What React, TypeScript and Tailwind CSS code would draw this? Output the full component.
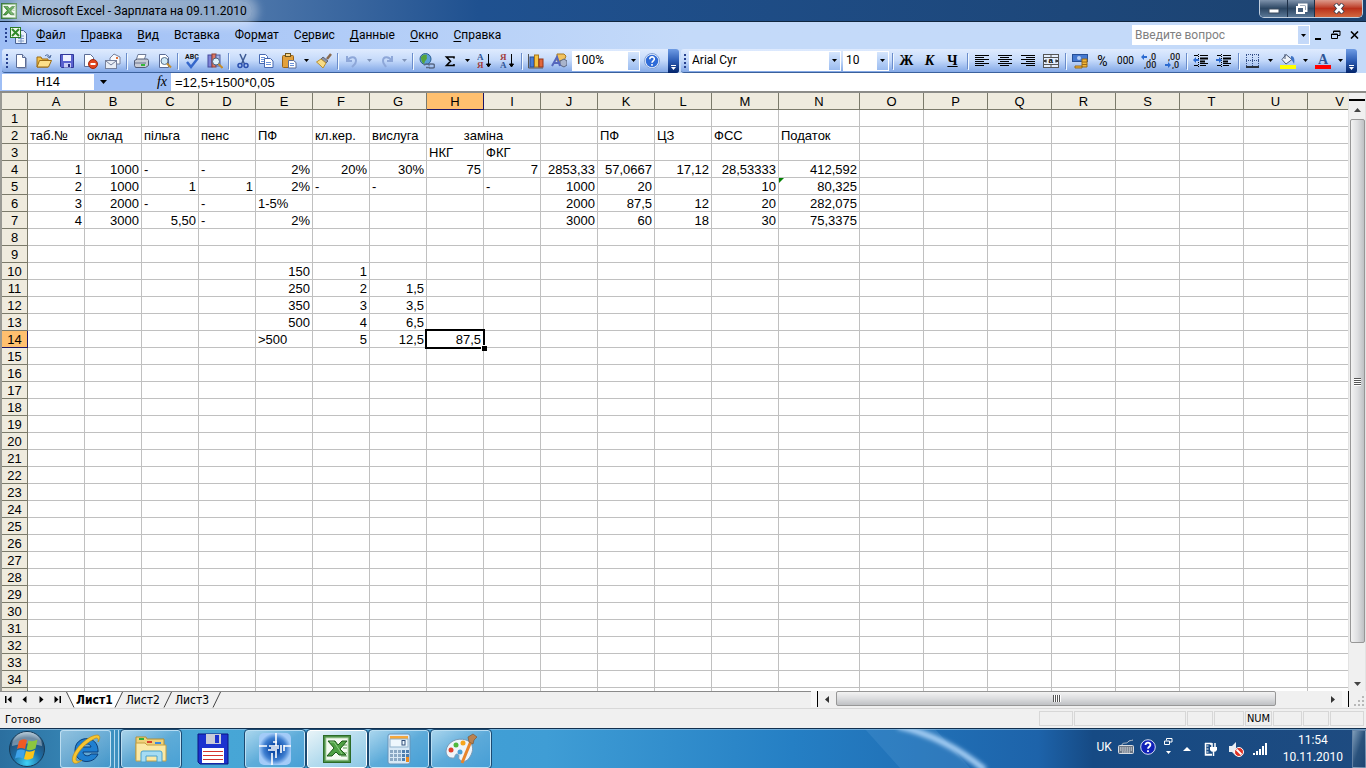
import { clsx } from 'clsx'
import type { ReactNode } from 'react'

const columns = [
  { name: 'A', w: 57 }, { name: 'B', w: 57 }, { name: 'C', w: 57 }, { name: 'D', w: 57 },
  { name: 'E', w: 57 }, { name: 'F', w: 57 }, { name: 'G', w: 57 }, { name: 'H', w: 57 },
  { name: 'I', w: 57 }, { name: 'J', w: 57 }, { name: 'K', w: 57 }, { name: 'L', w: 57 },
  { name: 'M', w: 67 }, { name: 'N', w: 81 }, { name: 'O', w: 64 }, { name: 'P', w: 64 },
  { name: 'Q', w: 64 }, { name: 'R', w: 64 }, { name: 'S', w: 64 }, { name: 'T', w: 64 },
  { name: 'U', w: 64 }, { name: 'V', w: 64 },
]

const rows = Array.from({ length: 34 }, (_, i) => i + 1)

const cells: Record<string, string> = {
  A2: 'таб.№', B2: 'оклад', C2: 'пільга', D2: 'пенс', E2: 'ПФ', F2: 'кл.кер.', G2: 'вислуга', H2: 'заміна',
  K2: 'ПФ', L2: 'ЦЗ', M2: 'ФСС', N2: 'Податок',
  H3: 'НКГ', I3: 'ФКГ',
  A4: '1', B4: '1000', C4: '-', D4: '-', E4: '2%', F4: '20%', G4: '30%', H4: '75', I4: '7',
  J4: '2853,33', K4: '57,0667', L4: '17,12', M4: '28,53333', N4: '412,592',
  A5: '2', B5: '1000', C5: '1', D5: '1', E5: '2%', F5: '-', G5: '-', I5: '-', J5: '1000', K5: '20', M5: '10', N5: '80,325',
  A6: '3', B6: '2000', C6: '-', D6: '-', E6: '1-5%', J6: '2000', K6: '87,5', L6: '12', M6: '20', N6: '282,075',
  A7: '4', B7: '3000', C7: '5,50', D7: '-', E7: '2%', J7: '3000', K7: '60', L7: '18', M7: '30', N7: '75,3375',
  E10: '150', F10: '1',
  E11: '250', F11: '2', G11: '1,5',
  E12: '350', F12: '3', G12: '3,5',
  E13: '500', F13: '4', G13: '6,5',
  E14: '>500', F14: '5', G14: '12,5', H14: '87,5',
}

const isNumber = (v: string) => /^[\d,]+%?$/.test(v)

const menus = [
  ['', 'Ф', 'айл'], ['', 'П', 'равка'], ['', 'В', 'ид'], ['Вст', 'а', 'вка'], ['Фор', 'м', 'ат'],
  ['С', 'е', 'рвис'], ['', 'Д', 'анные'], ['', 'О', 'кно'], ['', 'С', 'правка'],
]

function Svg({ children, size = 16, box = '0 0 16 16' }: { children: ReactNode; size?: number; box?: string }) {
  return <svg width={size} height={size} viewBox={box} className="block shrink-0" aria-hidden="true">{children}</svg>
}

function ExcelMark({ size = 16 }: { size?: number }) {
  return (
    <Svg size={size} box="0 0 28 28">
      <rect x="0.5" y="0.5" width="27" height="27" fill="#4d9147" stroke="#2c6a27" />
      <rect x="3" y="3" width="22" height="22" fill="#f4faf1" stroke="#b7d8b2" />
      <path d="M18 18h6M18 21h6M20 10h4M20 13h4" stroke="#8cbf86" strokeWidth="1.5" />
      <path d="M5 6h7l3 4 4-4h5l-7 8 6 6h-7l-3-3-4 4H4l7-8z" fill="#4ea043" stroke="#1c5a19" />
      <path d="M7 7h4l8 12" fill="none" stroke="#8fce86" />
    </Svg>
  )
}

function Grip() {
  return (
    <svg width="3" height="16" className="shrink-0" aria-hidden="true">
      {[1, 5, 9, 13].map(y => <rect key={y} x="0" y={y} width="2" height="2" fill="#27418f" />)}
    </svg>
  )
}

function Caret({ color = '#000' }: { color?: string }) {
  return <svg width="5" height="3" className="block shrink-0" aria-hidden="true"><path d="M0 0h5L2.500 3z" fill={color} /></svg>
}

function Tool({ label, children }: { label: string; children: ReactNode }) {
  return <button aria-label={label} className="flex h-[22px] w-[23px] shrink-0 items-center justify-center">{children}</button>
}

function Drop({ label, color }: { label: string; color?: string }) {
  return <button aria-label={label} className="flex h-[22px] w-3 shrink-0 items-center justify-center"><Caret color={color} /></button>
}

function Sep({ wide }: { wide?: boolean }) {
  return (
    <span className={clsx('flex shrink-0 justify-center', wide ? 'w-[6px]' : 'w-[5px]')}>
      <span className="h-4 w-px bg-[#6a8ccb] shadow-[1px_1px_0_#f1f9ff]" />
    </span>
  )
}

function Combo({ label, value, className }: { label: string; value: string; className?: string }) {
  return (
    <span className={clsx('relative block h-[20px] shrink-0 border border-white bg-white', className)}>
      <select aria-label={label} className="block h-full w-full appearance-none bg-white pl-[2px] pb-[1px] text-[12px] leading-4 text-black outline-none">
        <option>{value}</option>
      </select>
      <span className="pointer-events-none absolute inset-y-0 right-0 flex w-[11px] items-center justify-center bg-linear-to-b from-[#d6e6fd] to-[#9bbcf0]"><Caret /></span>
    </span>
  )
}

function BarEnd() {
  return (
    <button aria-label="Параметры панелей" className="flex h-6 w-[11px] shrink-0 flex-col items-center justify-end gap-px rounded-r-[3px] bg-linear-to-b from-[#6f9ce4] via-[#2c5cb4] to-[#04246b] pb-[3px]">
      <span className="h-px w-[5px] bg-white" />
      <Caret color="#fff" />
    </button>
  )
}

const page = <path d="M3.500 1.500h6l3 3v10h-9z" fill="#fff" stroke="#5b6c96" />

function Align({ mode }: { mode: 'left' | 'center' | 'right' }) {
  return (
    <Svg>
      {[2, 4, 6, 8, 10, 12].map((y, i) => {
        const w = i % 2 ? 9 : 14
        const x = mode === 'left' ? 1 : mode === 'right' ? 15 - w : Math.floor(8 - w / 2)
        return <rect key={y} x={x} y={y} width={w} height="1" fill="#000" />
      })}
    </Svg>
  )
}

function Sort({ top, bottom, topColor, bottomColor }: { top: string; bottom: string; topColor: string; bottomColor: string }) {
  return (
    <Svg>
      <text x="0" y="7" fontSize="9" fontWeight="700" fontFamily="Liberation Serif" fill={topColor}>{top}</text>
      <text x="0" y="15" fontSize="9" fontWeight="700" fontFamily="Liberation Serif" fill={bottomColor}>{bottom}</text>
      <path d="M11.500 1v12M9.500 11l2 3 2-3z" stroke="#000" fill="#000" />
    </Svg>
  )
}

function Decimal({ grow }: { grow?: boolean }) {
  return (
    <Svg>
      <text x={grow ? 8 : 4} y="7" fontSize="9" fontWeight="500" fontFamily="Roboto" fill="#222">{grow ? ',0' : ',00'}</text>
      <text x={grow ? 3 : 8} y="15" fontSize="9" fontWeight="500" fontFamily="Roboto" fill="#222">{grow ? ',00' : ',0'}</text>
      {grow
        ? <path d="M0 4l3-3v2h3v2H3v2z" fill="#2c6bd0" />
        : <path d="M7 12l-3-3v2H1v2h3v2z" fill="#2c6bd0" />}
    </Svg>
  )
}

function Indent({ out }: { out?: boolean }) {
  return (
    <Svg>
      <path d="M1 2.500h4M7 2.500h8M1 12.500h4M7 12.500h6" stroke="#000" />
      <path d="M7 5.500h8M7 8.500h5" stroke="#000" strokeWidth="2" />
      <path d="M7 10.500h8" stroke="#000" />
      <path d="M5.500 1v14" stroke="#000" strokeDasharray="1 1" />
      <path d={out ? 'M0 7l3-3v2h3v2H3v2z' : 'M6 7L3 4v2H0v2h3v2z'} fill="#2c6bd0" />
    </Svg>
  )
}

function StandardBar() {
  return (
    <div className="flex h-6 w-[677px] shrink-0 items-center rounded-[3px] border-b border-[#3b619c] bg-linear-to-b from-[#dfebfe] via-[#c4d9fa] to-[#83a8e6] pl-1">
      <Grip />
      <Tool label="Создать"><Svg>{page}<path d="M9.500 1.500v3h3" fill="#cfd9ee" stroke="#5b6c96" /><path d="M13.500 5v10.500H5" stroke="#8fa0c4" fill="none" /></Svg></Tool>
      <Tool label="Открыть"><Svg><path d="M1 4h4l1 2h6v8H1z" fill="#f3c24b" stroke="#9c6a12" /><path d="M3.500 7.500h12l-3 6.500H1z" fill="#fde08a" stroke="#9c6a12" /><path d="M9 3c2-2 4-1 4.500 1M15 2l-1.200 3-2.400-1.500" stroke="#3d5c92" fill="none" /></Svg></Tool>
      <Tool label="Сохранить"><Svg><path d="M1.500 1.500h13v13h-12l-1-1z" fill="#5a62cf" stroke="#30389a" /><rect x="4" y="2" width="8" height="6" fill="#eef1ff" /><rect x="5" y="10" width="7" height="4.500" fill="#c9cdf4" /><rect x="9" y="11" width="2" height="3" fill="#262e84" /></Svg></Tool>
      <Tool label="Разрешение"><Svg><path d="M2.500 1.500h6l3 3v9h-9z" fill="#fff" stroke="#5b6c96" /><circle cx="11" cy="11" r="4.500" fill="#e1451f" stroke="#9e2a10" /><path d="M8.500 11h5" stroke="#fff" strokeWidth="2" /></Svg></Tool>
      <Tool label="Сообщение"><Svg><path d="M5 5l4-4 6 3v7H5z" fill="#f6f8fd" stroke="#76809b" /><rect x="0.500" y="7.500" width="11" height="8" fill="#e9edf5" stroke="#76809b" /><path d="M1 8l5 4 5-4" fill="none" stroke="#76809b" /><rect x="11" y="4" width="2" height="2" fill="#e37236" /></Svg></Tool>
      <Sep />
      <Tool label="Печать"><Svg><path d="M5 1.500h8l-2 6H3z" fill="#fff" stroke="#6f7c98" /><path d="M1.500 7.500l3-1.500h10l1 1.500v5l-3 2h-10l-1-2z" fill="#c8ccd6" stroke="#515c76" /><path d="M2 10h11" stroke="#6a758e" /><rect x="8" y="11" width="4" height="2" fill="#33b93a" /></Svg></Tool>
      <Tool label="Просмотр"><Svg>{page}<circle cx="8.500" cy="8" r="3.500" fill="#cfe9f7" stroke="#5a708b" /><path d="M11 10.500l4 4" stroke="#c58c28" strokeWidth="2" /></Svg></Tool>
      <Sep />
      <Tool label="Орфография"><Svg><text x="1" y="6" fontSize="7" fontWeight="700" fontFamily="Roboto" fill="#111">ABC</text><path d="M3 9l4 5 7-9" stroke="#3567cb" strokeWidth="2.500" fill="none" /></Svg></Tool>
      <Tool label="Справочные материалы"><Svg><rect x="1" y="2" width="4" height="12" fill="#7e83d8" stroke="#454a9c" /><rect x="5" y="1" width="4" height="13" fill="#db7867" stroke="#96402f" /><rect x="9" y="2" width="4" height="11" fill="#a5b3e5" stroke="#4c5ca0" /><circle cx="9" cy="8.500" r="3.500" fill="#dff2fb" stroke="#49617f" /><path d="M11.500 11l4 4" stroke="#c58c28" strokeWidth="2" /></Svg></Tool>
      <Sep />
      <Tool label="Вырезать"><Svg><path d="M5 1l4.500 10M11 1L6.500 11" stroke="#3d5a94" strokeWidth="1.500" /><circle cx="5" cy="12.500" r="2" fill="none" stroke="#2b4fae" strokeWidth="1.500" /><circle cx="11" cy="12.500" r="2" fill="none" stroke="#2b4fae" strokeWidth="1.500" /></Svg></Tool>
      <Tool label="Копировать"><Svg><path d="M1.500 1.500h6l2 2v7h-8z" fill="#fff" stroke="#4668b0" /><path d="M3 4.500h4M3 6.500h5M3 8.500h4" stroke="#6c93d8" /><path d="M6.500 5.500h6l2.500 2.500v6.500H6.500z" fill="#fff" stroke="#4668b0" /><path d="M8 9.500h5M8 11.500h5" stroke="#6c93d8" /></Svg></Tool>
      <Tool label="Вставить"><Svg><rect x="1.500" y="2.500" width="11" height="12" rx="1" fill="#e3a13c" stroke="#9a6317" /><rect x="4.500" y="0.500" width="5" height="3" fill="#f8d68b" stroke="#6b541f" /><path d="M7.500 7.500h5l2.500 2v5.500H7.500z" fill="#fff" stroke="#5b6c96" /><path d="M9 10.500h4M9 12.500h4" stroke="#6c93d8" /></Svg></Tool>
      <Drop label="Варианты вставки" />
      <Tool label="Формат по образцу"><Svg><path d="M15 1l-4 5" stroke="#8a6a4c" strokeWidth="2.500" /><path d="M7 4l5 4-2 2-5-4z" fill="#8c93a5" stroke="#5f667a" /><path d="M5 6l5 4-3 5C5 13 3 11 0.500 9z" fill="#f7dc86" stroke="#b88f2f" /></Svg></Tool>
      <Sep />
      <Tool label="Отменить"><Svg><path d="M3 3v5h5M3.500 7.500C6 3 12 3 12 8c0 3-2 4-4 6" fill="none" stroke="#8ea7d8" strokeWidth="2" /></Svg></Tool>
      <Drop label="Список отмены" color="#7f93b8" />
      <Tool label="Вернуть"><Svg><path d="M13 3v5H8M12.500 7.500C10 3 4 3 4 8c0 3 2 4 3 6" fill="none" stroke="#8ea7d8" strokeWidth="2" /></Svg></Tool>
      <Drop label="Список возврата" color="#7f93b8" />
      <Sep />
      <Tool label="Гиперссылка"><Svg><circle cx="6.500" cy="6" r="5.500" fill="#5aa1d8" stroke="#2d5f93" /><path d="M2 4c2-3 5-3 6-2-1 2 1 3-1 5s-1 3-2 4c-2-1-3-4-3-7z" fill="#55a43b" /><path d="M5.500 12.500c0-2 4-2 5 0M7 14.500h4M10 11h3.500a2 2 0 010 4H10" fill="none" stroke="#596a86" strokeWidth="1.500" /></Svg></Tool>
      <Tool label="Автосумма"><Svg><path d="M12 5.500V4H4.500l4 4.200-4 4.300H12V11" fill="none" stroke="#000" strokeWidth="1.600" /></Svg></Tool>
      <Drop label="Функции суммы" />
      <Tool label="По возрастанию"><Sort top="А" bottom="Я" topColor="#2e5596" bottomColor="#a33d3d" /></Tool>
      <Tool label="По убыванию"><Sort top="Я" bottom="А" topColor="#a33d3d" bottomColor="#2e5596" /></Tool>
      <Sep />
      <Tool label="Мастер диаграмм"><Svg><path d="M0.500 1v14H15" stroke="#555" fill="none" /><rect x="2" y="4" width="4" height="10" fill="#4b7fd6" stroke="#274c94" /><rect x="6.500" y="2" width="4" height="12" fill="#f6c544" stroke="#a9761b" /><rect x="11" y="6" width="4" height="8" fill="#e2673a" stroke="#96361a" /></Svg></Tool>
      <Tool label="Рисование"><Svg><path d="M6 1h7l2 2-2 5H6z" fill="#f1c25e" stroke="#a97a22" /><path d="M9 8l4-2 3 2v4l-3 2-4-2z" fill="#a9b4cb" stroke="#5a6680" /><path d="M1 13L6 4l3 9M3 10h5" fill="none" stroke="#5567bd" strokeWidth="2" /></Svg></Tool>
      <span className="w-[2px] shrink-0" />
      <Combo label="Масштаб" value="100%" className="w-[68px]" />
      <Tool label="Справка"><Svg><circle cx="8" cy="8" r="7" fill="#2f6bd8" stroke="#e8f1ff" strokeWidth="1.500" /><circle cx="8" cy="8" r="7.500" fill="none" stroke="#5c83c4" strokeWidth="0.700" /><path d="M5.800 6.200C5.800 3 10.500 3.300 10.300 6.200 10.200 7.800 8 7.800 8 9.800M8 11v1.800" fill="none" stroke="#fff" strokeWidth="1.600" /></Svg></Tool>
      <span className="flex-1" />
      <BarEnd />
    </div>
  )
}

function FormatBar() {
  return (
    <div className="flex h-6 w-[676px] shrink-0 items-center rounded-[3px] border-b border-[#3b619c] bg-linear-to-b from-[#dfebfe] via-[#c4d9fa] to-[#83a8e6] pl-[3px]">
      <Grip />
      <span className="w-[2px] shrink-0" />
      <Combo label="Шрифт" value="Arial Cyr" className="w-[152px]" />
      <span className="w-[2px] shrink-0" />
      <Combo label="Размер" value="10" className="w-[46px]" />
      <Sep wide />
      <Tool label="Полужирный"><b className="font-['Liberation_Serif',serif] text-[14px] leading-4">Ж</b></Tool>
      <Tool label="Курсив"><i className="font-['Liberation_Serif',serif] text-[14px] leading-4 font-bold">К</i></Tool>
      <Tool label="Подчеркнутый"><u className="font-['Liberation_Serif',serif] text-[14px] leading-4 font-bold">Ч</u></Tool>
      <Sep wide />
      <Tool label="По левому краю"><Align mode="left" /></Tool>
      <Tool label="По центру"><Align mode="center" /></Tool>
      <Tool label="По правому краю"><Align mode="right" /></Tool>
      <Tool label="Объединить"><Svg><rect x="0.500" y="1.500" width="15" height="13" fill="#e5effd" stroke="#555" /><path d="M0 4.500h16M0 11.500h16M8 1v3M8 12v3" stroke="#555" /><text x="5.500" y="10" fontSize="8" fontWeight="700" fontFamily="Liberation Sans" fill="#000">a</text><path d="M1 8h3M12 8h3M3 6.500L1.500 8 3 9.500M13 6.500L14.500 8 13 9.500" stroke="#000" fill="none" /></Svg></Tool>
      <Sep wide />
      <Tool label="Денежный формат"><Svg><rect x="0.500" y="1.500" width="15" height="7" fill="#4478cf" stroke="#264f96" /><circle cx="7" cy="5" r="2" fill="#b7d0f5" /><path d="M3 13h7v2H3zM10 6h5v8h-5z" fill="#f3b637" stroke="#9b6a17" /><path d="M10 9h5M10 11.500h5" stroke="#9b6a17" /></Svg></Tool>
      <Tool label="Процентный формат"><span className="text-[14px] leading-4">%</span></Tool>
      <Tool label="Формат с разделителями"><span className="text-[10px] leading-4">000</span></Tool>
      <Tool label="Увеличить разрядность"><Decimal grow /></Tool>
      <Tool label="Уменьшить разрядность"><Decimal /></Tool>
      <Sep wide />
      <Tool label="Уменьшить отступ"><Indent out /></Tool>
      <Tool label="Увеличить отступ"><Indent /></Tool>
      <Sep wide />
      <Tool label="Границы"><Svg><path d="M1.500 2v11M7.500 2v11M13.500 2v11M1 1.500h13M1 7.500h13" stroke="#35508a" strokeDasharray="1 1" fill="none" /><path d="M1 14h13" stroke="#000" strokeWidth="1.500" /></Svg></Tool>
      <Drop label="Виды границ" />
      <Tool label="Цвет заливки"><Svg><path d="M6 1.500l6 5-6 4.500-4-4.500z" fill="#eef2f8" stroke="#4b5a78" /><path d="M5 1v5" stroke="#4b5a78" /><path d="M11 3c3 0 4 3 3 8-1-2-2-4-3-5z" fill="#3f73c5" /><rect x="0" y="12" width="16" height="4" fill="#ff0" /></Svg></Tool>
      <Drop label="Палитра заливки" />
      <Tool label="Цвет шрифта"><Svg><text x="3" y="11" fontSize="14" fontWeight="700" fontFamily="Liberation Serif" fill="#2e5596" className="leading-3">A</text><rect x="0" y="12" width="16" height="4" fill="#f00" /></Svg></Tool>
      <Drop label="Палитра шрифта" />
      <span className="flex-1" />
      <BarEnd />
    </div>
  )
}

function TitleBar() {
  return (
    <header className="flex h-[22px] shrink-0 items-center border-b border-[#10263f] bg-linear-to-r from-[#7d9fc6] via-[#1f5190] via-35% to-[#1c426f] pl-[1px]">
      <ExcelMark />
      <h1 className="rounded-full bg-white/35 px-[5px] text-[12px] leading-5 text-black shadow-[0_0_8px_6px_rgba(255,255,255,0.35)]">Microsoft Excel - Зарплата на 09.11.2010</h1>
      <div className="mr-[3px] ml-auto flex h-[18px] self-start overflow-hidden rounded-b-[5px] border border-t-0 border-[#c0cede]">
        <button aria-label="Свернуть" className="flex w-7 items-center justify-center border-r border-[#1c2f47] bg-linear-to-b from-[#7f93ac] via-[#2c4663] to-[#5a7897]">
          <svg width="12" height="12"><rect x="1" y="6" width="10" height="4" fill="#fff" stroke="#3c4c60" /></svg>
        </button>
        <button aria-label="Восстановить" className="flex w-[27px] items-center justify-center border-r border-[#1c2f47] bg-linear-to-b from-[#7f93ac] via-[#2c4663] to-[#5a7897]">
          <svg width="13" height="12"><path d="M4 3V1.500h7.500v6.500H10" fill="none" stroke="#fff" strokeWidth="2" /><rect x="2" y="4" width="7" height="6" fill="#48607c" stroke="#fff" strokeWidth="2" /></svg>
        </button>
        <button aria-label="Закрыть" className="flex w-[47px] items-center justify-center bg-linear-to-b from-[#dc9a8c] via-[#b9301a] to-[#d3673f]">
          <svg width="12" height="11"><path d="M2 1l8 9M10 1L2 10" stroke="#3b3b4b" strokeWidth="4.500" /><path d="M2.500 1.500l7 8M9.500 1.500l-7 8" stroke="#fff" strokeWidth="2.800" /></svg>
        </button>
      </div>
    </header>
  )
}

function MenuBar() {
  return (
    <nav className="flex h-[26px] shrink-0 items-center pl-[5px]">
      <Grip />
      <span className="mr-[9px] ml-[2px]">
        <Svg size={17} box="0 0 17 17"><path d="M5.500 3.500h8l3 3v10h-11z" fill="#e9f0fb" stroke="#4a6293" /><path d="M8 9h6M8 11.500h6M8 14h6M11 7v9" stroke="#7d98c8" /><rect x="0.500" y="0.500" width="10" height="10" fill="#eef8ec" stroke="#2b7a26" /><path d="M2 2l7 7M9 2L2 9" stroke="#2f8a29" strokeWidth="2" /></Svg>
      </span>
      {menus.map(([pre, key, post]) => (
        <button key={pre + key + post} className="mr-[15px] text-[12px] leading-4 whitespace-nowrap text-black">{pre}<u className="underline-offset-2">{key}</u>{post}</button>
      ))}
      <span className="relative ml-auto block h-[20px] w-[178px] border border-white bg-white">
        <input aria-label="Введите вопрос" placeholder="Введите вопрос" className="block h-full w-full bg-white px-[2px] text-[12px] leading-4 outline-none placeholder:text-[#808080]" />
        <button aria-label="Список вопросов" className="absolute inset-y-0 right-0 flex w-[11px] items-center justify-center bg-[#c4d9f9]"><Caret /></button>
      </span>
      <button aria-label="Свернуть книгу" className="ml-1 flex h-4 w-[17px] items-center"><svg width="7" height="12"><rect x="1" y="9" width="6" height="2" /></svg></button>
      <button aria-label="Восстановить книгу" className="flex h-4 w-[19px] items-center"><svg width="10" height="10"><path d="M2.500 3V1h6.500v4.500H7M2 1.500h7" fill="none" stroke="#000" /><path d="M0.500 4h6v4.500h-6zM0 4.500h7" fill="none" stroke="#000" /></svg></button>
      <button aria-label="Закрыть книгу" className="mr-[7px] flex h-4 w-[9px] items-center"><svg width="9" height="8"><path d="M1 0.500l7 7M8 0.500l-7 7" stroke="#000" strokeWidth="1.600" /></svg></button>
    </nav>
  )
}

function FormulaBar() {
  return (
    <div className="flex h-[18px] shrink-0 items-center bg-[#9ebef5] pl-[2px] font-['Liberation_Sans',Arial,sans-serif] text-[13px]">
      <input aria-label="Имя" defaultValue="H14" className="h-4 w-[92px] bg-white text-center leading-4 outline-none" />
      <button aria-label="Список имен" className="flex h-4 w-[18px] items-center justify-center"><svg width="7" height="4"><path d="M0 0h7L3.500 4z" /></svg></button>
      <button aria-label="Вставка функции" className="ml-auto w-3 font-['Liberation_Serif',serif] text-[14px] leading-4 italic">fx</button>
      <input aria-label="Строка формул" defaultValue="=12,5+1500*0,05" className="ml-[3px] h-[18px] w-[calc(100%-169px)] bg-white pl-1 leading-4 outline-none" />
    </div>
  )
}

function Sheet() {
  return (
    <div className="min-w-0 flex-1 overflow-hidden border-l-2 border-[#9a9a94] bg-white">
      <table className="w-max table-fixed border-separate border-spacing-0 font-['Liberation_Sans',Arial,sans-serif] text-[13px] leading-[14px] text-black">
        <colgroup>
          <col style={{ width: 26 }} />
          {columns.map(c => <col key={c.name} style={{ width: c.w }} />)}
        </colgroup>
        <thead>
          <tr>
            <td className="h-[17px] border-r border-b border-[#7b7a6a] bg-[#efebde] p-0" />
            {columns.map(c => (
              <th key={c.name} scope="col" className={clsx('h-[17px] border-r border-b px-0 pt-[2px] pb-0 text-center font-normal', c.name === 'H' ? 'border-[#1b1464] bg-[#ffc06f]' : 'border-[#7b7a6a] bg-[#efebde]')}>{c.name}</th>
            ))}
          </tr>
        </thead>
        <tbody>
          {rows.map(r => (
            <tr key={r}>
              <th scope="row" className={clsx('h-[17px] border-r border-b px-0 pt-[2px] pb-0 text-center font-normal', r === 14 ? 'border-[#1b1464] bg-[#ffc06f]' : 'border-[#7b7a6a] bg-[#efebde]')}>{r}</th>
              {columns.map(c => {
                const id = c.name + r
                const v = cells[id] ?? ''
                if (id === 'I2') return null
                return (
                  <td key={id} colSpan={id === 'H2' ? 2 : 1}
                    className={clsx('relative h-[17px] border-r border-b border-[#c0c0c0] px-[2px] pt-[2px] pb-0 whitespace-nowrap', id === 'H14' && 'z-10', id === 'H2' ? 'text-center' : isNumber(v) ? 'text-right' : 'text-left')}>
                    {v}
                    {id === 'N5' && <svg width="5" height="5" className="absolute top-0 left-0"><path d="M0 0h5L0 5z" fill="#008000" /></svg>}
                    {id === 'H14' && (
                      <span className="pointer-events-none absolute -top-[2px] -right-[2px] -bottom-[2px] -left-[2px] border-2 border-black">
                        <span className="absolute -right-[4px] -bottom-[4px] h-[6px] w-[6px] border-t border-l border-white bg-black" />
                      </span>
                    )}
                  </td>
                )
              })}
            </tr>
          ))}
          <tr aria-hidden="true">
            <td className="h-[17px] border-r border-[#7b7a6a] bg-[#efebde] p-0" />
            {columns.map(c => <td key={c.name} className="border-r border-[#c0c0c0] p-0" />)}
          </tr>
        </tbody>
      </table>
    </div>
  )
}

function VerticalScroll() {
  return (
    <div className="flex w-[18px] shrink-0 flex-col items-center border-x border-[#e3e3e3] bg-[#f0f0f0]">
      <span className="h-2 w-full border-b-2 border-black bg-[#f0f0f0]" />
      <button aria-label="Вверх" className="flex h-[18px] w-full shrink-0 items-center justify-center"><svg width="7" height="4"><path d="M0 4h7L3.500 0z" fill="#444" /></svg></button>
      <span className="flex w-[15px] flex-[522] flex-col items-center justify-center gap-px rounded-[2px] border border-[#979797] bg-linear-to-r from-[#f3f3f3] via-[#dedfe1] to-[#bfc1c4]">
        {[0, 1, 2, 3].map(i => <span key={i} className="h-px w-[7px] bg-[#555] shadow-[0_1px_0_#fff]" />)}
      </span>
      <span className="flex-[34]" />
      <button aria-label="Вниз" className="flex h-[14px] w-full shrink-0 items-center justify-center"><svg width="7" height="4"><path d="M0 0h7L3.500 4z" fill="#444" /></svg></button>
    </div>
  )
}

const Slash = () => <svg width="9" height="16" className="block shrink-0"><path d="M8.500 0L1 15.500" stroke="#444" fill="none" /></svg>

function SheetTabs() {
  return (
    <div className="flex h-[18px] shrink-0 border-b border-[#d8d8d8] bg-[#f0f0f0] font-['DejaVu_Sans_Condensed','Open_Sans',sans-serif]">
      <div className="flex h-4 w-[811px] shrink-0 items-center border-t border-[#8a8a8a]">
        <div className="flex w-[66px] shrink-0 items-center justify-around">
          <button aria-label="Первый лист"><svg width="7" height="7"><path d="M0 0h1.500v7H0zM6.500 0v7L2.500 3.500z" /></svg></button>
          <button aria-label="Предыдущий лист"><svg width="7" height="7"><path d="M5.500 0v7L1.500 3.500z" /></svg></button>
          <button aria-label="Следующий лист"><svg width="7" height="7"><path d="M1.500 0v7l4-3.500z" /></svg></button>
          <button aria-label="Последний лист"><svg width="7" height="7"><path d="M5.500 0H7v7H5.500zM0.500 0v7l4-3.500z" /></svg></button>
        </div>
        <div className="flex items-center text-[12px] leading-4">
          <svg width="9" height="16" className="block shrink-0"><path d="M0 0h9v15.500H7.500z" fill="#fff" /><path d="M0.500 0L8 15.500" stroke="#444" /></svg>
          <button className="flex h-[15px] items-center bg-white px-px font-bold">Лист1</button>
          <svg width="9" height="16" className="block shrink-0"><path d="M0 0h8.500L1 15.500H0z" fill="#fff" /><path d="M8.500 0L1 15.500" stroke="#444" /></svg>
          <button className="h-[15px] px-[3px]">Лист2</button>
          <Slash />
          <button className="h-[15px] px-[3px]">Лист3</button>
          <Slash />
        </div>
      </div>
      <span className="h-4 w-[7px] shrink-0 border-r border-black bg-[#f7f7f7]" />
      <button aria-label="Влево" className="flex h-4 w-[18px] shrink-0 items-center justify-center"><svg width="4" height="7"><path d="M4 0v7L0 3.500z" fill="#333" /></svg></button>
      <span className="flex h-[15px] flex-[440] items-center justify-center gap-px rounded-[2px] border border-[#979797] bg-linear-to-b from-[#f3f3f3] via-[#dcdddf] to-[#bfc1c4]">
        {[0, 1, 2, 3].map(i => <span key={i} className="h-[7px] w-px bg-[#555] shadow-[1px_0_0_#fff]" />)}
      </span>
      <span className="flex-[48]" />
      <button aria-label="Вправо" className="flex h-4 w-[18px] shrink-0 items-center justify-center"><svg width="4" height="7"><path d="M0 0v7l4-3.500z" fill="#333" /></svg></button>
      <span className="h-4 w-[7px] shrink-0 border-r border-black bg-[#f7f7f7]" />
      <svg width="17" height="16" className="shrink-0"><path d="M13 5h2v2h-2zM9 9h2v2H9zM13 9h2v2h-2zM5 13h2v2H5zM9 13h2v2H9zM13 13h2v2h-2z" fill="#b8b8b8" /></svg>
    </div>
  )
}

function StatusBar() {
  return (
    <footer className="flex h-[19px] shrink-0 items-center gap-px bg-[#f0f0f0] pr-[2px] pl-[5px] font-['DejaVu_Sans_Condensed','Open_Sans',sans-serif] text-[11px] leading-3 text-black">
      <span className="mr-auto pt-[2px]">Готово</span>
      <span className="h-[15px] w-[34px] border border-[#d7d7d7]" />
      <span className="h-[15px] w-[112px] border border-[#d7d7d7]" />
      <span className="h-[15px] w-[26px] border border-[#d7d7d7]" />
      <span className="h-[15px] w-[30px] border border-[#d7d7d7]" />
      <span className="flex h-[15px] w-[27px] items-center justify-center border border-[#d7d7d7]">NUM</span>
      <span className="h-[15px] w-[29px] border border-[#d7d7d7]" />
      <span className="h-[15px] w-[26px] border border-[#d7d7d7]" />
      <span className="h-[15px] w-[34px] border border-[#d7d7d7]" />
    </footer>
  )
}

function TaskButton({ label, state = 'open', children }: { label: string; state?: 'open' | 'active' | 'pinned'; children: ReactNode }) {
  return (
    <button aria-label={label}
      className={clsx('flex h-[38px] w-[60px] shrink-0 items-center justify-center rounded-[3px]',
        state === 'open' && 'border border-[#d3ecfa]/80 bg-linear-to-br from-[#c2e2f3]/80 via-[#6fb2dc]/60 to-[#4a9fd6]/60 outline outline-[#1b4a72]',
        state === 'active' && 'border border-white bg-linear-to-br from-[#e8f4f8] via-[#b5dcee] to-[#8cc8e6] outline outline-[#1b4a72]')}>
      {children}
    </button>
  )
}

function Taskbar() {
  return (
    <div className="relative flex h-10 shrink-0 items-center overflow-hidden border-t border-[#12304f] bg-linear-to-r from-[#3179a8] via-[#2276bb] via-65% to-[#1b4b85] text-white">
      <svg className="absolute inset-0 h-full w-full" viewBox="0 0 1366 40" preserveAspectRatio="none" aria-hidden="true">
        <defs>
          <linearGradient id="sky" x1="0" x2="1" y1="0" y2="0">
            <stop offset="0" stopColor="#2b6f9f" /><stop offset="0.14" stopColor="#48a7d6" /><stop offset="0.4" stopColor="#3f9dd5" />
            <stop offset="0.58" stopColor="#257fc4" /><stop offset="0.76" stopColor="#1d63aa" /><stop offset="0.8" stopColor="#164a84" /><stop offset="1" stopColor="#1e4b80" />
          </linearGradient>
          <filter id="soft"><feGaussianBlur stdDeviation="2" /></filter>
        </defs>
        <rect width="1366" height="40" fill="url(#sky)" />
        <path d="M865 0l35 40h70L935 0z" fill="#5b9fd8" opacity="0.250" />
        <path d="M898-3Q945 8 985 42" fill="none" stroke="#a8d0f5" strokeWidth="6" filter="url(#soft)" />
        <path d="M0 0.500h1366" stroke="#8fc0e4" opacity="0.700" />
      </svg>
      <div className="relative flex h-full w-full items-center">
        <button aria-label="Пуск" className="flex w-[60px] shrink-0 justify-center pr-[6px]">
          <svg width="38" height="38" viewBox="0 0 38 38">
            <defs><radialGradient id="orb" cx="0.5" cy="0.9" r="0.9"><stop offset="0" stopColor="#3fd3f7" /><stop offset="0.45" stopColor="#1c6ca5" /><stop offset="0.800" stopColor="#244f74" /><stop offset="1" stopColor="#9fbdd0" /></radialGradient></defs>
            <circle cx="19" cy="19" r="17.500" fill="url(#orb)" stroke="#163a57" />
            <path d="M4 16A15 14 0 0134 16Q19 11 4 16z" fill="#fff" opacity="0.350" />
            <path d="M11 11q4-3 8-1l-2 9q-4-2-8 0z" fill="#ee5a24" />
            <path d="M20.500 10.500q4 2 9-1l-2 9q-5 3-9 1z" fill="#8cc63f" />
            <path d="M9 20.500q4-2 8 0l-2 8q-4-2-8 0z" fill="#3fa3ea" />
            <path d="M18 21q4 2 9-1l-2 8q-5 3-9 1z" fill="#fcc419" />
          </svg>
        </button>
        <div className="flex shrink-0 items-center gap-[2px]">
          <span className="flex w-[59px] shrink-0 gap-[2px]">
            <button aria-label="Internet Explorer" className="flex h-[38px] w-[51px] shrink-0 items-center justify-center rounded-[3px] border border-[#d3ecfa]/80 bg-linear-to-br from-[#a9d2ea]/80 to-[#4a9fd6]/50">
              <svg width="32" height="32" viewBox="0 0 32 32">
                <path fillRule="evenodd" d="M28 19H13c0 4 6 5 8 2h7C24 32 5 31 5 17 5 2 29 1 28 19zM13 14h8c-0.500-4-7-4-8 0z" fill="#1f7fd0" stroke="#0a3f7c" />
                <path d="M3 29C-1 22 15 3 27 2c4 0 3 4 1 7 1-4-1-5-4-3C14 11 5 22 6 27c1 2 4 1 6 0-4 4-8 4-9 2z" fill="#f7c531" stroke="#b5840f" strokeWidth="0.600" />
              </svg>
            </button>
            <span className="h-[38px] w-[2px] border-r border-[#d3ecfa]/80" />
            <span className="h-[38px] w-[2px] border-r border-[#d3ecfa]/80" />
          </span>
          <TaskButton label="Проводник">
            <svg width="32" height="32" viewBox="0 0 32 32">
              <path d="M1 4h10l1 2h17v20H1z" fill="#f0d27a" stroke="#b28f37" />
              <path d="M4 5h5v2H4z" fill="#2fae3a" /><path d="M12 8h5v2h-5z" fill="#d8402e" /><path d="M20 9h6v2h-6z" fill="#3b8be0" />
              <path d="M1 10h9l2 2h19v16H1z" fill="#fbe9a6" stroke="#c5a145" />
              <path d="M6 29v-9q0-2 2-2h17q2 0 2 2v9h-5v-6H11v6z" fill="#a5dcf3" stroke="#4aa0cc" />
            </svg>
          </TaskButton>
          <TaskButton label="Диск" state="pinned">
            <svg width="32" height="32" viewBox="0 0 32 32">
              <path d="M1 1h30v30H3l-2-2z" fill="#1c33cf" stroke="#0a1780" />
              <rect x="9" y="1" width="15" height="10" fill="#c9ccd8" /><rect x="18" y="2" width="4" height="8" fill="#1c33cf" />
              <rect x="5" y="15" width="22" height="15" fill="#fff" /><path d="M6 18.500h20M6 22.500h20M6 26.500h20" stroke="#d3322d" />
            </svg>
          </TaskButton>
          <TaskButton label="1С">
            <svg width="32" height="32" viewBox="0 0 32 32">
              <defs><radialGradient id="flake"><stop offset="0.250" stopColor="#0d4aa8" /><stop offset="0.700" stopColor="#3f7fd0" /><stop offset="1" stopColor="#a3cbf8" /></radialGradient></defs>
              <rect width="32" height="32" rx="5" fill="url(#flake)" />
              <path d="M17 0v6M0 13h8M10 13h10M14 9h4M17 6v7M13 17h5M0 17M12 15h8M22 12v8M25 12v6M28 13h4M25 13h3M13 20v12M17 18v7M9 17h9" stroke="#fff" strokeWidth="1.600" />
            </svg>
          </TaskButton>
          <TaskButton label="Microsoft Excel" state="active"><ExcelMark size={28} /></TaskButton>
          <TaskButton label="Калькулятор">
            <svg width="24" height="32" viewBox="0 0 24 32">
              <rect x="1" y="1" width="22" height="30" rx="2" fill="#d8e9f6" stroke="#6793b8" />
              <rect x="3" y="3" width="18" height="3" fill="#f5a73b" /><rect x="3" y="6" width="18" height="8" fill="#eef7fd" stroke="#8fb2cc" />
              <rect x="15" y="7.500" width="3" height="4.500" fill="none" stroke="#33507a" />
              {[17, 21, 25].map(y => [3, 7, 11, 15, 19].map(x => <rect key={`${x}-${y}`} x={x} y={y} width="3" height="3" fill={x > 12 ? '#4f7fae' : '#8aa8c4'} />))}
              <rect x="19" y="24" width="3" height="5" fill="#f08c1d" />
            </svg>
          </TaskButton>
          <TaskButton label="Paint">
            <svg width="32" height="32" viewBox="0 0 32 32">
              <path d="M1 18C2 9 12 4 21 7c7 2 8 9 5 15s-7 8-11 5c-3-2 1-5-3-6-3 0-1 5-5 4-4 0-6-4-6-7z" fill="#eef4f9" stroke="#7c9ab5" />
              <circle cx="6" cy="17" r="2.500" fill="#e2412c" /><circle cx="11" cy="12" r="2.500" fill="#4fb83c" /><circle cx="18" cy="10" r="2.500" fill="#f6a51c" /><circle cx="15" cy="19" r="2.500" fill="#4a9fd6" />
              <path d="M26 8l-9 22" stroke="#e8842a" strokeWidth="3" /><path d="M24 9l-1-5 5-3 4 3-3 3-1 4z" fill="#b98252" stroke="#7b4f28" strokeWidth="0.600" />
            </svg>
          </TaskButton>
        </div>
        <div className="ml-auto flex shrink-0 items-center">
          <span className="mr-[6px] -mt-1 text-[12px] leading-4">UK</span>
          <button aria-label="Клавиатура" className="mr-[6px] -mt-1"><Svg><rect x="0.500" y="6.500" width="15" height="8" rx="1" fill="#6b7684" stroke="#d8dde3" /><path d="M2 9h12M2 11h12M4 13h8" stroke="#e8ebef" strokeDasharray="1.500 0.700" /><path d="M4 6c0-3 5-1 6-3s3-1 5-2" fill="none" stroke="#b8bfc8" /></Svg></button>
          <button aria-label="Помощь" className="mr-2 -mt-1"><Svg><circle cx="8" cy="8" r="7.300" fill="#1020b8" stroke="#d7dcf0" /><path d="M5.500 6C5.500 2.800 10.600 3 10.400 6 10.300 7.700 8 7.800 8 9.800M8 11.200v1.800" fill="none" stroke="#fff" strokeWidth="1.800" /></Svg></button>
          <button aria-label="Параметры языка" className="mr-[10px] -mt-1"><svg width="9" height="17"><path d="M2.500 2.500V0.500H8v3.500H6M0.500 3h5v3.500h-5z" fill="none" stroke="#fff" /><path d="M2 13h5L4.500 16z" fill="#fff" /></svg></button>
          <button aria-label="Скрытые значки" className="mr-3"><svg width="8" height="4"><path d="M0 4h8L4 0z" fill="#fff" /></svg></button>
          <button aria-label="Питание" className="mr-[9px]"><Svg><path d="M2 2.500h6V4M2.500 2v12H9M2 13.500h7" stroke="#fff" strokeWidth="1.500" fill="none" /><path d="M3.500 5h2M3.500 8h2M3.500 11h2" stroke="#fff" /><path d="M9 2v4M12 2v4" stroke="#fff" strokeWidth="1.500" /><path d="M7 6h7v3q-1 2-3.500 2T7 9z" fill="#fff" /><path d="M10.500 11v4" stroke="#fff" strokeWidth="1.500" /></Svg></button>
          <button aria-label="Громкость" className="mr-2"><Svg><path d="M1 5h3l4-4v14l-4-4H1z" fill="#e9eef3" /><circle cx="11" cy="11" r="4.500" fill="#e03224" stroke="#fff" /><path d="M8.500 8.500l5 5" stroke="#fff" strokeWidth="1.800" /></Svg></button>
          <button aria-label="Сеть" className="mr-[15px]"><Svg><path d="M1 12h2v2H1zM4 10h2v4H4zM7 8h2v6H7zM10 5h2v9h-2zM13 2h2v12h-2z" fill="#fff" /></Svg></button>
          <div className="mr-[9px] text-center text-[12px] leading-[17px]">
            <div>11:54</div>
            <div>10.11.2010</div>
          </div>
          <button aria-label="Показать рабочий стол" className="h-[38px] w-[14px] border border-[#8fa9c4]/60 bg-linear-to-br from-[#7f9db9] via-[#2a527c] to-[#1d4573]" />
        </div>
      </div>
    </div>
  )
}

export default function App() {
  return (
    <div className="flex h-screen flex-col overflow-hidden bg-linear-to-r from-[#9ebef5] to-[#c4daf9] to-50% font-['Roboto','Open_Sans',sans-serif]">
      <TitleBar />
      <MenuBar />
      <div className="flex h-[25px] shrink-0 items-end gap-[2px] pl-[2px]">
        <StandardBar />
        <FormatBar />
      </div>
      <FormulaBar />
      <main className="flex min-h-0 flex-1 border-t-2 border-[#8c8c88]">
        <Sheet />
        <VerticalScroll />
      </main>
      <SheetTabs />
      <StatusBar />
      <Taskbar />
    </div>
  )
}
